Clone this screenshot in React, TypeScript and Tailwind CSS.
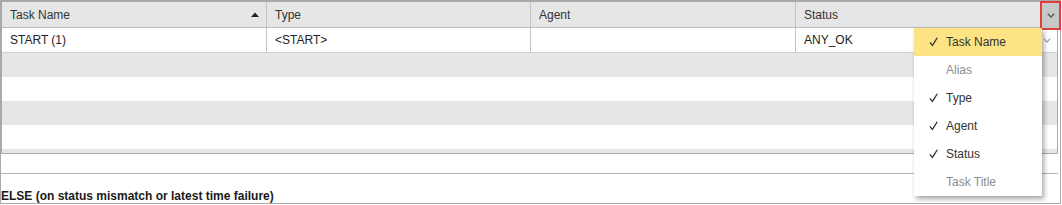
import React from "react";

const Chevron = ({ className }: { className?: string }) => (
  <svg className={className} width="8" height="5" viewBox="0 0 8 5" fill="none">
    <path d="M0.8 0.8 L4 4 L7.2 0.8" stroke="currentColor" strokeWidth="1.3" />
  </svg>
);

const Check = () => (
  <svg width="9" height="10" viewBox="0 0 9 10">
    <polygon points="0.4,5.8 1.4,5 3.3,7.4 7.7,0.4 8.8,1.1 3.5,9.6" fill="#2a2a2a" />
  </svg>
);

const items = [
  { label: "Task Name", checked: true, enabled: true, active: true },
  { label: "Alias", checked: false, enabled: false },
  { label: "Type", checked: true, enabled: true },
  { label: "Agent", checked: true, enabled: true },
  { label: "Status", checked: true, enabled: true },
  { label: "Task Title", checked: false, enabled: false },
];

export default function App() {
  return (
    <div
      className="relative w-[1062px] h-[205px] bg-white overflow-hidden text-[12px] text-[#222]"
      style={{ fontFamily: '"Liberation Sans", Arial, sans-serif' }}
    >
      <div className="w-[1061px] h-[204px] border border-[#a9a9a9] flex flex-col">
        {/* grid */}
        <div className="w-[1057px] h-[153px] border border-[#a9a9a9] flex flex-col">
          {/* header */}
          <div className="flex h-[26px] bg-[#e6e6e6] border-b border-[#bdbdbd] text-[#333]">
            <div className="w-[265px] border-r border-[#c4c4c4] flex items-center pl-[8px] pr-[7px]">
              <span className="flex-1">Task Name</span>
              <svg width="8" height="5" viewBox="0 0 8 5">
                <path d="M0 5 L4 0.5 L8 5 Z" fill="#222" />
              </svg>
            </div>
            <div className="w-[264px] border-r border-[#c4c4c4] flex items-center pl-[8px]">Type</div>
            <div className="w-[265px] border-r border-[#c4c4c4] flex items-center pl-[8px]">Agent</div>
            <div className="flex-1 flex items-center pl-[8px]">Status</div>
          </div>
          {/* row 1 */}
          <div className="flex h-[25px] bg-white border-b border-[#cfcfcf]">
            <div className="w-[265px] border-r border-[#c4c4c4] flex items-center pl-[8px]">START (1)</div>
            <div className="w-[264px] border-r border-[#c4c4c4] flex items-center pl-[8px]">&lt;START&gt;</div>
            <div className="w-[265px] border-r border-[#c4c4c4] flex items-center pl-[8px]"></div>
            <div className="flex-1 flex items-center pl-[8px] pr-[6px]">
              <span className="flex-1">ANY_OK</span>
              <Chevron className="text-[#aaa]" />
            </div>
          </div>
          {/* filler rows */}
          <div className="flex-1 flex flex-col overflow-hidden">
            <div className="h-[24px] shrink-0 bg-[#e6e6e6]" />
            <div className="h-[24px] shrink-0 bg-white" />
            <div className="h-[24px] shrink-0 bg-[#e6e6e6]" />
            <div className="h-[24px] shrink-0 bg-white" />
            <div className="h-[24px] shrink-0 bg-[#e6e6e6]" />
          </div>
        </div>
        {/* spacer row */}
        <div className="w-[1057px] h-[20px] border-b border-[#b5b5b5]" />
        <div className="pt-[15px] font-bold leading-[14px] text-[#1a1a1a]">
          ELSE (on status mismatch or latest time failure)
        </div>
      </div>

      {/* column chooser button */}
      <div className="absolute left-[1040px] top-[1px] w-[21px] h-[29px] border-2 border-[#e0403a] bg-[#c8c8c8] flex items-center justify-center text-[#555]">
        <Chevron />
      </div>

      {/* menu */}
      <div className="absolute left-[914px] top-[28px] w-[128px] bg-white shadow-[2px_3px_5px_rgba(0,0,0,0.35)] flex flex-col">
        {items.map((it) => (
          <div
            key={it.label}
            className={
              "h-[28px] flex items-center " +
              (it.active ? "bg-[#fde383] " : "") +
              (it.enabled ? "text-[#333]" : "text-[#8c8c8c]")
            }
          >
            <span className="w-[32px] pl-[15px] flex items-center">
              {it.checked ? <Check /> : null}
            </span>
            <span>{it.label}</span>
          </div>
        ))}
      </div>
    </div>
  );
}
